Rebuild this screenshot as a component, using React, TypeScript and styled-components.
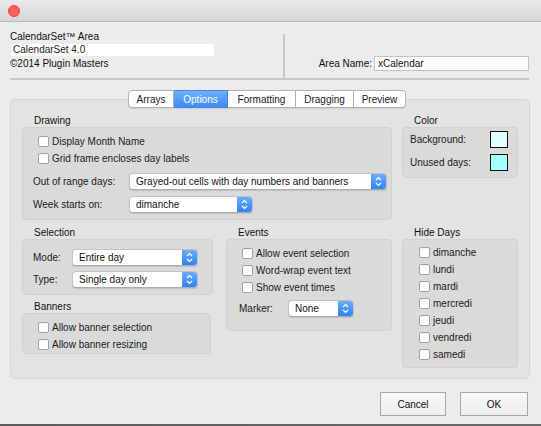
import styled, { createGlobalStyle } from "styled-components";

const GlobalStyle = createGlobalStyle`
  html, body {
    margin: 0;
    padding: 0;
  }
  body {
    background: #ececec;
    font-family: "Liberation Sans", Arial, sans-serif;
    font-size: 10px;
    color: #1f1f1f;
  }
`;

const Window = styled.div`
  width: 541px;
  height: 426px;
  display: flex;
  flex-direction: column;
  background: #ececec;
  overflow: hidden;
`;

const TitleBar = styled.div`
  height: 22px;
  box-sizing: border-box;
  border-bottom: 1px solid #b9b9b9;
  background: linear-gradient(#ebebeb, #d6d6d6);
  display: flex;
  align-items: center;
  padding-left: 8px;
`;

const CloseDot = styled.span`
  width: 12px;
  height: 12px;
  box-sizing: border-box;
  border-radius: 50%;
  background: #fc5f58;
  border: 1px solid #e2463f;
`;

const Header = styled.div`
  display: flex;
  height: 58px;
  box-sizing: border-box;
  margin: 0 12px 0 10px;
  border-bottom: 2px solid #c8c8c8;
`;

const HeaderLeft = styled.div`
  width: 273px;
  padding-top: 9px;
  display: flex;
  flex-direction: column;
`;

const HeaderText = styled.div`
  height: 12px;
  line-height: 12px;
  color: #111;
`;

const InfoField = styled.div`
  width: 203px;
  height: 12px;
  line-height: 12px;
  margin: 1px 0 2px 1px;
  padding-left: 2px;
  box-sizing: border-box;
  background: #fff;
  color: #222;
`;

const VSeparator = styled.div`
  width: 2px;
  height: 44px;
  align-self: flex-end;
  background: #c8c8c8;
`;

const HeaderRight = styled.div`
  flex: 1;
  display: flex;
  justify-content: flex-end;
  align-items: center;
  padding-top: 34px;
  height: 15px;
`;

const NameLabel = styled.span`
  margin-right: 2px;
  color: #111;
`;

const TextInput = styled.div`
  width: 155px;
  height: 15px;
  line-height: 13px;
  box-sizing: border-box;
  background: #fff;
  border: 1px solid #c3c3c3;
  padding-left: 3px;
  color: #111;
`;

const TabRow = styled.div`
  position: relative;
  z-index: 1;
  display: flex;
  margin: 10px 0 -9px 128px;
  height: 18px;
`;

const Tab = styled.div<{ $active?: boolean; $w: number }>`
  width: ${(p) => p.$w}px;
  height: 18px;
  box-sizing: border-box;
  display: flex;
  align-items: center;
  justify-content: center;
  border: 1px solid #b3b3b3;
  border-left: none;
  background: ${(p) => (p.$active ? "linear-gradient(#6eb0fa, #3a8bf8)" : "#fff")};
  border-color: ${(p) => (p.$active ? "#3f86e6" : "#b3b3b3")};
  color: ${(p) => (p.$active ? "#fff" : "#1a1a1a")};
  box-shadow: 0 1px 1px rgba(0, 0, 0, 0.08);

  &:first-child {
    border-left: 1px solid #b3b3b3;
    border-radius: 4px 0 0 4px;
  }
  &:last-child {
    border-radius: 0 4px 4px 0;
  }
`;

const Panel = styled.div`
  height: 280px;
  box-sizing: border-box;
  margin: 0 11px 0 10px;
  border: 1px solid #d5d5d5;
  border-radius: 5px;
  background: #e3e3e3;
  padding: 15px 11px 0 11px;
  display: flex;
  flex-direction: column;
`;

const Row = styled.div<{ $top?: number }>`
  display: flex;
  align-items: flex-start;
  margin-top: ${(p) => p.$top ?? 0}px;
`;

const Column = styled.div<{ $w: number; $gap?: number }>`
  width: ${(p) => p.$w}px;
  margin-right: ${(p) => p.$gap ?? 0}px;
  display: flex;
  flex-direction: column;
`;

const GroupLabel = styled.div<{ $top?: number }>`
  height: 12px;
  line-height: 12px;
  padding-left: 12px;
  margin-top: ${(p) => p.$top ?? 0}px;
  color: #111;
`;

const GroupBox = styled.div<{ $pad: string; $w?: number }>`
  box-sizing: border-box;
  width: ${(p) => (p.$w ? `${p.$w}px` : "auto")};
  border: 1px solid #d2d2d2;
  border-radius: 4px;
  background: #dadada;
  padding: ${(p) => p.$pad};
  display: flex;
  flex-direction: column;
`;

const CheckList = styled.div<{ $indent: number }>`
  padding-left: ${(p) => p.$indent}px;
  display: flex;
  flex-direction: column;
`;

const CheckRow = styled.label`
  height: 17px;
  display: flex;
  align-items: center;
  color: #1a1a1a;
`;

const CheckBox = styled.span`
  width: 11px;
  height: 11px;
  box-sizing: border-box;
  margin-right: 3px;
  border: 1px solid #a3a3a3;
  border-radius: 2px;
  background: #fff;
  box-shadow: inset 0 1px 0 rgba(0, 0, 0, 0.04);
`;

const FieldRow = styled.div<{ $top?: number; $indent?: number }>`
  display: flex;
  align-items: center;
  height: 17px;
  margin-top: ${(p) => p.$top ?? 0}px;
  padding-left: ${(p) => p.$indent ?? 0}px;
`;

const FieldLabel = styled.span<{ $w: number }>`
  width: ${(p) => p.$w}px;
  flex-shrink: 0;
  color: #1a1a1a;
`;

const Select = styled.div<{ $w: number }>`
  width: ${(p) => p.$w}px;
  height: 17px;
  box-sizing: border-box;
  display: flex;
  align-items: center;
  background: #fff;
  border: 1px solid #c2c2c2;
  border-bottom-color: #ababab;
  border-radius: 4px;
  box-shadow: 0 1px 1px rgba(0, 0, 0, 0.12);
  overflow: hidden;
`;

const SelectText = styled.span`
  flex: 1;
  padding-left: 6px;
  color: #111;
  white-space: nowrap;
`;

const Stepper = styled.span`
  width: 15px;
  height: 100%;
  display: flex;
  align-items: center;
  justify-content: center;
  background: linear-gradient(#6aadfb, #2f82f7);
`;

const SwatchRow = styled.div<{ $top?: number }>`
  height: 17px;
  display: flex;
  align-items: center;
  justify-content: space-between;
  margin-top: ${(p) => p.$top ?? 0}px;
  color: #1a1a1a;
`;

const Swatch = styled.span<{ $color: string }>`
  width: 18px;
  height: 17px;
  box-sizing: border-box;
  border: 1.5px solid #111;
  background: ${(p) => p.$color};
`;

const Footer = styled.div`
  display: flex;
  justify-content: flex-end;
  padding: 13px 13px 0 0;
  gap: 14px;
`;

const Button = styled.div<{ $w: number }>`
  width: ${(p) => p.$w}px;
  height: 24px;
  box-sizing: border-box;
  display: flex;
  align-items: center;
  justify-content: center;
  border: 1px solid #a8a8a8;
  background: linear-gradient(#f8f8f8, #eeeeee);
  color: #111;
`;

const BottomEdge = styled.div`
  margin-top: auto;
  height: 2px;
  background: linear-gradient(90deg, #5c5c5c, #6a6a6a);
`;

const Arrows = () => (
  <svg width="7" height="11" viewBox="0 0 7 11">
    <path d="M1 4 L3.5 1.5 L6 4 M1 7 L3.5 9.5 L6 7" fill="none" stroke="#fff" strokeWidth="1.2" />
  </svg>
);

const Dropdown = ({ w, value }: { w: number; value: string }) => (
  <Select $w={w}>
    <SelectText>{value}</SelectText>
    <Stepper>
      <Arrows />
    </Stepper>
  </Select>
);

const Check = ({ label }: { label: string }) => (
  <CheckRow>
    <CheckBox />
    {label}
  </CheckRow>
);

const tabs = [
  { name: "Arrays", w: 46 },
  { name: "Options", w: 54 },
  { name: "Formatting", w: 68 },
  { name: "Dragging", w: 58 },
  { name: "Preview", w: 52 },
];

const days = ["dimanche", "lundi", "mardi", "mercredi", "jeudi", "vendredi", "samedi"];

export default function App() {
  return (
    <Window>
      <GlobalStyle />
      <TitleBar>
        <CloseDot />
      </TitleBar>

      <Header>
        <HeaderLeft>
          <HeaderText>CalendarSet™ Area</HeaderText>
          <InfoField>CalendarSet 4.0</InfoField>
          <HeaderText>©2014 Plugin Masters</HeaderText>
        </HeaderLeft>
        <VSeparator />
        <HeaderRight>
          <NameLabel>Area Name:</NameLabel>
          <TextInput>xCalendar</TextInput>
        </HeaderRight>
      </Header>

      <TabRow>
        {tabs.map((t) => (
          <Tab key={t.name} $w={t.w} $active={t.name === "Options"}>
            {t.name}
          </Tab>
        ))}
      </TabRow>

      <Panel>
        <Row>
          <Column $w={370} $gap={10}>
            <GroupLabel>Drawing</GroupLabel>
            <GroupBox $pad="5px 0 6px 10px">
              <CheckList $indent={5}>
                <Check label="Display Month Name" />
                <Check label="Grid frame encloses day labels" />
              </CheckList>
              <FieldRow $top={6}>
                <FieldLabel $w={96}>Out of range days:</FieldLabel>
                <Dropdown w={258} value="Grayed-out cells with day numbers and banners" />
              </FieldRow>
              <FieldRow $top={6}>
                <FieldLabel $w={96}>Week starts on:</FieldLabel>
                <Dropdown w={124} value="dimanche" />
              </FieldRow>
            </GroupBox>
          </Column>
          <Column $w={116}>
            <GroupLabel>Color</GroupLabel>
            <GroupBox $pad="3px 9px 6px 7px">
              <SwatchRow>
                Background:
                <Swatch $color="#e2ffff" />
              </SwatchRow>
              <SwatchRow $top={6}>
                Unused days:
                <Swatch $color="#a4ffff" />
              </SwatchRow>
            </GroupBox>
          </Column>
        </Row>

        <Row $top={7}>
          <Column $w={191} $gap={13}>
            <GroupLabel>Selection</GroupLabel>
            <GroupBox $pad="9px 0 6px 10px">
              <FieldRow>
                <FieldLabel $w={39}>Mode:</FieldLabel>
                <Dropdown w={126} value="Entire day" />
              </FieldRow>
              <FieldRow $top={5}>
                <FieldLabel $w={39}>Type:</FieldLabel>
                <Dropdown w={126} value="Single day only" />
              </FieldRow>
            </GroupBox>
            <GroupLabel $top={6}>Banners</GroupLabel>
            <GroupBox $pad="5px 0 0 15px" $w={189}>
              <Check label="Allow banner selection" />
              <Check label="Allow banner resizing" />
            </GroupBox>
          </Column>
          <Column $w={166} $gap={10}>
            <GroupLabel>Events</GroupLabel>
            <GroupBox $pad="5px 0 13px 0">
              <CheckList $indent={15}>
                <Check label="Allow event selection" />
                <Check label="Word-wrap event text" />
                <Check label="Show event times" />
              </CheckList>
              <FieldRow $top={4} $indent={12}>
                <FieldLabel $w={49}>Marker:</FieldLabel>
                <Dropdown w={66} value="None" />
              </FieldRow>
            </GroupBox>
          </Column>
          <Column $w={116}>
            <GroupLabel>Hide Days</GroupLabel>
            <GroupBox $pad="4px 0 4px 16px">
              {days.map((d) => (
                <Check key={d} label={d} />
              ))}
            </GroupBox>
          </Column>
        </Row>
      </Panel>

      <Footer>
        <Button $w={66}>Cancel</Button>
        <Button $w={68}>OK</Button>
      </Footer>
      <BottomEdge />
    </Window>
  );
}
